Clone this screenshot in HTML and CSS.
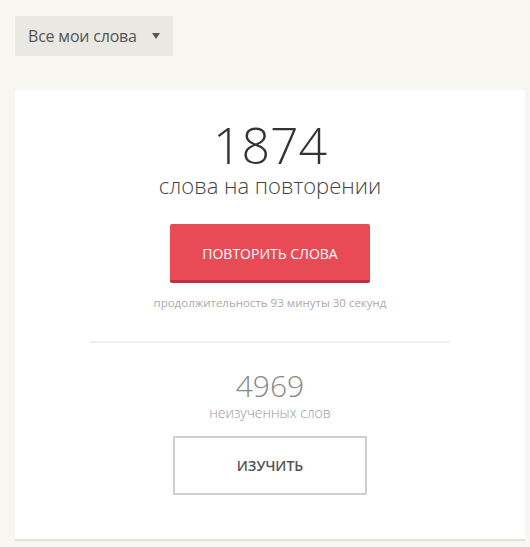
FILE: index.html
```html
<!DOCTYPE html>
<html lang="ru">
<head>
<meta charset="utf-8">
<link rel="stylesheet" href="styles.css">
</head>
<body>
<div class="page">
  <div class="dropdown">
    <span class="dropdown-label">Все мои слова</span>
    <span class="dropdown-caret"></span>
  </div>
  <div class="card">
    <div class="big-number">1874</div>
    <div class="big-caption">слова на повторении</div>
    <button class="btn-primary">ПОВТОРИТЬ СЛОВА</button>
    <div class="duration">продолжительность 93 минуты 30 секунд</div>
    <div class="divider"></div>
    <div class="small-number">4969</div>
    <div class="small-caption">неизученных слов</div>
    <button class="btn-outline">ИЗУЧИТЬ</button>
  </div>
</div>
</body>
</html>
```

FILE: styles.css
```css
html, body {
  margin: 0;
  padding: 0;
  background: #f7f6f1;
  font-family: "Open Sans", "Noto Sans", sans-serif;
}
.page {
  padding: 16px 0 0 15px;
  display: flex;
  flex-direction: column;
  align-items: flex-start;
}
.dropdown {
  width: 158px;
  height: 40px;
  box-sizing: border-box;
  background: #e9e8e3;
  display: flex;
  align-items: center;
  padding: 0 13px;
  justify-content: space-between;
}
.dropdown-label {
  font-size: 16px;
  color: #555;
  letter-spacing: -0.2px;
}
.dropdown-caret {
  width: 0;
  height: 0;
  border-left: 4px solid transparent;
  border-right: 4px solid transparent;
  border-top: 6px solid #555;
}
.card {
  margin-top: 34px;
  width: 510px;
  box-sizing: border-box;
  background: #fff;
  border-bottom: 2px solid #e2e1dc;
  display: flex;
  flex-direction: column;
  align-items: center;
  padding: 30px 0 44px;
}
.big-number {
  font-size: 50px;
  font-weight: 300;
  line-height: 50px;
  color: #333;
}
.big-caption {
  font-size: 22px;
  font-weight: 300;
  line-height: 30px;
  color: #444;
}
.btn-primary {
  margin-top: 24px;
  width: 200px;
  height: 59px;
  border: none;
  border-bottom: 3px solid #b8323d;
  border-radius: 2px;
  background: #e84a56;
  color: #fff;
  font-family: inherit;
  font-size: 14px;
  padding: 3px 0 0;
}
.duration {
  margin-top: 12px;
  font-size: 11.5px;
  line-height: 16px;
  color: #aaa;
}
.divider {
  margin-top: 30px;
  width: 360px;
  height: 2px;
  background: #f0efec;
}
.small-number {
  margin-top: 26px;
  font-size: 30px;
  font-weight: 300;
  line-height: 34px;
  color: #888;
}
.small-caption {
  font-size: 14px;
  line-height: 20px;
  color: #999;
  font-weight: 300;
}
.btn-outline {
  margin-top: 13px;
  width: 194px;
  height: 59px;
  background: #fff;
  border: 2px solid #cfcfcf;
  border-radius: 1px;
  font-family: inherit;
  font-size: 14px;
  font-weight: 600;
  color: #555;
}
```
